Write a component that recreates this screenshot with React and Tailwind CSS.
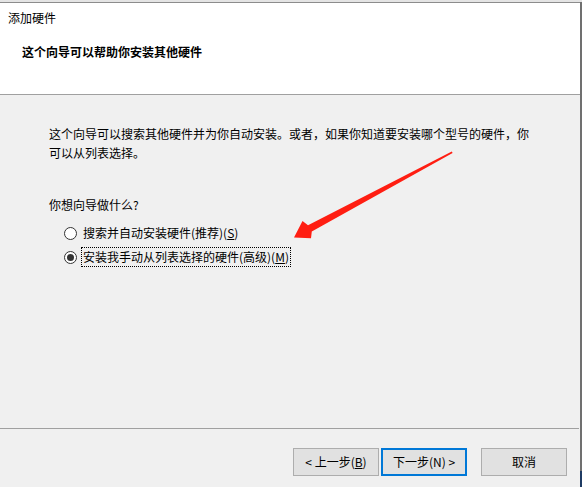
export default function App() {
  const font = { fontFamily: '"Noto Sans CJK SC", "Noto Sans", sans-serif' };

  return (
    <div className="relative flex w-[582px] h-[487px] bg-[#f0f0f0] text-[12px] text-black overflow-hidden" style={font}>
      {/* Main dialog column */}
      <div className="flex flex-col w-[580px] h-full">
        {/* Sliver of the window above */}
        <div className="h-[2px] bg-[#e4e4e4]" />
        <div className="h-px bg-[#8c8c8c]" />

        {/* Header */}
        <div className="flex flex-col h-[92px] bg-white border-b border-[#a0a0a0] pt-[5px]">
          <div className="pl-[8px] leading-[20px]">添加硬件</div>
          <div className="pl-[22px] mt-[14px] leading-[20px] font-bold">这个向导可以帮助你安装其他硬件</div>
        </div>

        {/* Body */}
        <div className="flex-1 flex flex-col pl-[49px] pt-[29px]">
          <p className="leading-[19px]">
            这个向导可以搜索其他硬件并为你自动安装。或者，如果你知道要安装哪个型号的硬件，你
            <br />
            可以从列表选择。
          </p>
          <div className="mt-[33px] leading-[20px]">你想向导做什么?</div>

          <div className="flex flex-col mt-[8px] pl-[15px] gap-[4px]">
            <label className="flex items-center h-[20px] gap-[4px]">
              <span className="w-[13px] h-[13px] rounded-full border border-[#333] bg-white" />
              <span className="leading-[18px] px-px border border-transparent">
                搜索并自动安装硬件(推荐)(<span className="underline">S</span>)
              </span>
            </label>
            <label className="flex items-center h-[20px] gap-[4px]">
              <span className="flex items-center justify-center w-[13px] h-[13px] rounded-full border border-[#333] bg-white">
                <span className="w-[7px] h-[7px] rounded-full bg-[#333]" />
              </span>
              <span className="leading-[18px] px-px border border-dotted border-black">
                安装我手动从列表选择的硬件(高级)(<span className="underline">M</span>)
              </span>
            </label>
          </div>
        </div>

        {/* Separator */}
        <div className="h-px bg-[#a0a0a0] mr-px" />

        {/* Footer buttons */}
        <div className="h-[58px] flex justify-end items-start pt-[19px] pr-[13px]">
          <button className="w-[86px] h-[28px] border border-[#adadad] bg-[#e1e1e1] leading-none">
            &lt; 上一步(<span className="underline">B</span>)
          </button>
          <button className="ml-[2px] w-[86px] h-[28px] border-2 border-[#0078d7] bg-[#e1e1e1] leading-none">
            下一步(N) &gt;
          </button>
          <button className="ml-[14px] w-[86px] h-[28px] border border-[#adadad] bg-[#e1e1e1] leading-none">
            取消
          </button>
        </div>
      </div>

      {/* Window right edge */}
      <div className="flex flex-col w-[2px] h-full">
        <div className="h-[2px] bg-[#e4e4e4]" />
        <div className="flex-1 bg-[#707070]" />
        <div className="h-[16px] bg-[#1f3b63]" />
      </div>

      {/* Red annotation arrow */}
      <svg className="absolute left-0 top-0 pointer-events-none" width="582" height="487" viewBox="0 0 582 487">
        <polygon
          points="294,237.5 302.5,221 308,225.3 451.8,151.4 452.6,153 311.8,231.6 311,238.2"
          fill="#ff1e12"
        />
      </svg>
    </div>
  );
}
